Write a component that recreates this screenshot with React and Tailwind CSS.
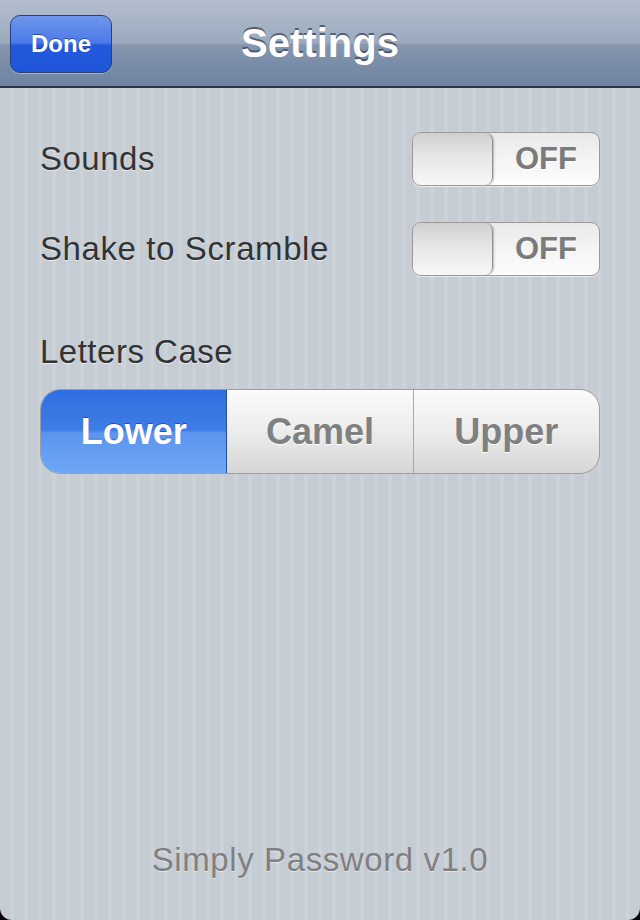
const font = { fontFamily: '"Liberation Sans", Arial, sans-serif' };

function Toggle() {
  return (
    <div className="flex h-[54px] w-[188px] overflow-hidden rounded-[9px] border border-[#9a9a9a] bg-[linear-gradient(#e9e9e9,#f4f4f4_50%,#fdfdfd)] shadow-[0_1px_0_rgba(255,255,255,0.6)]">
      <div className="h-full w-[80px] rounded-[8px] border-r border-[#8f8f8f] bg-[linear-gradient(#cfcfcf,#e6e6e6_45%,#f7f7f7)] shadow-[1px_0_2px_rgba(0,0,0,0.25)]" />
      <div className="flex flex-1 items-center justify-center text-[31px] font-bold text-[#7b7b7b] [text-shadow:0_1px_0_white]">
        OFF
      </div>
    </div>
  );
}

function Segmented({ items, selected }) {
  return (
    <div className="flex h-[85px] overflow-hidden rounded-[20px] border border-[#9e9e9e] bg-[linear-gradient(#fbfbfb,#ececec_50%,#d6d6d6)]">
      {items.map((item, i) => {
        const active = item === selected;
        return (
          <div
            key={item}
            className={
              active
                ? 'flex flex-1 items-center justify-center border-r border-[#1f4fa8] bg-[linear-gradient(#2f6ee0,#3f7de6_48%,#5b95ee_52%,#6ea7f5)] text-[36px] font-bold text-white [text-shadow:0_-1px_0_rgba(0,0,0,0.35)]'
              : 'flex flex-1 items-center justify-center text-[36px] font-bold text-[#808080] [text-shadow:0_1px_0_white] ' +
                  (i < items.length - 1 ? 'border-r border-[#a8a8a8]' : '')
            }
          >
            {item}
          </div>
        );
      })}
    </div>
  );
}

export default function App() {
  return (
    <div
      className="flex h-[920px] w-[640px] flex-col overflow-hidden bg-black"
      style={font}
    >
      <div className="relative flex h-[88px] shrink-0 items-center justify-center border-b-2 border-[#2d3642] bg-[linear-gradient(#b3bfcf,#9aa9bd_50%,#8596ae_52%,#6d83a1)]">
        <button className="absolute left-[10px] top-[15px] flex h-[58px] w-[102px] items-center justify-center rounded-[10px] border border-[#2c3f73] bg-[linear-gradient(#7097ee,#4a7ae8_48%,#2359dc_52%,#1f55d8)] text-[24px] font-bold text-white shadow-[0_1px_0_rgba(255,255,255,0.35)] [text-shadow:0_-1px_0_rgba(0,0,0,0.4)]">
          Done
        </button>
        <h1 className="text-[40px] font-bold text-white [text-shadow:0_-2px_0_rgba(50,60,80,0.7)]">
          Settings
        </h1>
      </div>

      <div className="flex flex-1 flex-col rounded-b-[12px] bg-[repeating-linear-gradient(90deg,#c5ccd4_0px,#c5ccd4_10px,#cbd2d8_10px,#cbd2d8_14px)] px-[40px]">
        <div className="mt-[44px] flex items-center justify-between">
          <span className="text-[33px] tracking-[0.5px] text-[#333] [text-shadow:0_1px_0_rgba(255,255,255,0.6)]">
            Sounds
          </span>
          <Toggle />
        </div>
        <div className="mt-[36px] flex items-center justify-between">
          <span className="text-[33px] tracking-[0.6px] text-[#333] [text-shadow:0_1px_0_rgba(255,255,255,0.6)]">
            Shake to Scramble
          </span>
          <Toggle />
        </div>
        <div className="mt-[58px] text-[33px] leading-[36px] tracking-[0.5px] text-[#333] [text-shadow:0_1px_0_rgba(255,255,255,0.6)]">
          Letters Case
        </div>
        <div className="mt-[19px]">
          <Segmented items={['Lower', 'Camel', 'Upper']} selected="Lower" />
        </div>
        <div className="mt-auto mb-[42px] text-center text-[33px] leading-[36px] tracking-[0.6px] text-[#808080] [text-shadow:0_1px_0_rgba(255,255,255,0.5)]">
          Simply Password v1.0
        </div>
      </div>
    </div>
  );
}
